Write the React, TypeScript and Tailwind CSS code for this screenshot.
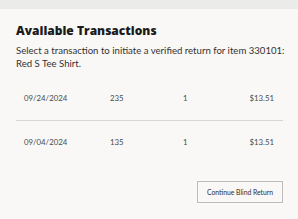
export default function App() {
  const rows = [
    { date: "09/24/2024", id: "235", qty: "1", price: "$13.51" },
    { date: "09/04/2024", id: "135", qty: "1", price: "$13.51" },
  ];
  return (
    <div className="w-[298px] h-[219px] bg-[#f9f8f6] overflow-hidden" style={{ fontFamily: 'Lato, "Open Sans", sans-serif' }}>
      <div className="h-[9px] bg-[#ebebea]" />
      <div className="pl-4 pr-[15px] pt-[14px]">
        <h1 className="text-[12px] font-extrabold leading-[16px] text-[#1b1b1b]" style={{ fontFamily: '"Open Sans", sans-serif' }}>Available Transactions</h1>
        <p className="mt-[5px] w-[274px] text-[9.6px] leading-[13px] text-[#323232]">
          Select a transaction to initiate a verified return for item 330101: Red S Tee Shirt.
        </p>
        <div className="mt-[8px]">
          {rows.map((r, i) => (
            <div key={i} className={`flex items-center h-[43px] px-2 text-[7.8px] text-[#4a4a4a] ${i === 0 ? "border-b border-[#d6d6d4]" : ""}`}>
              <span className="w-[86px]">{r.date}</span>
              <span className="w-[73px]">{r.id}</span>
              <span className="w-[30px]">{r.qty}</span>
              <span className="flex-1 text-right pr-[1px]">{r.price}</span>
            </div>
          ))}
        </div>
        <div className="flex justify-end mt-[17px]">
          <button className="w-[86px] h-[22px] border border-[#bdbcba] bg-[#f9f8f6] text-[6.8px] text-[#2e2e2e]">
            Continue Blind Return
          </button>
        </div>
      </div>
    </div>
  );
}
